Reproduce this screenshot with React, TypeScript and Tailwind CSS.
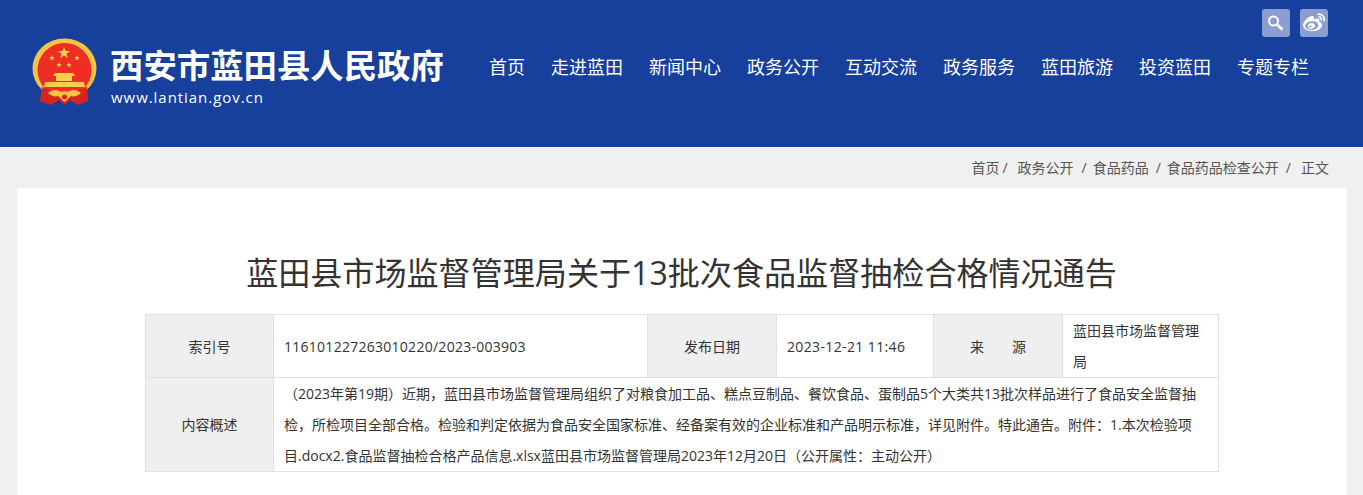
import { FaWeibo } from "react-icons/fa";

const nav = ["首页", "走进蓝田", "新闻中心", "政务公开", "互动交流", "政务服务", "蓝田旅游", "投资蓝田", "专题专栏"];

function Star({ x, y, r, fill = "#f7cf4e" }: { x: number; y: number; r: number; fill?: string }) {
  const pts = Array.from({ length: 10 }, (_, i) => {
    const a = -Math.PI / 2 + (i * Math.PI) / 5;
    const d = i % 2 === 0 ? r : r * 0.4;
    return `${(x + d * Math.cos(a)).toFixed(2)},${(y + d * Math.sin(a)).toFixed(2)}`;
  }).join(" ");
  return <polygon points={pts} fill={fill} />;
}

function Emblem() {
  return (
    <svg width="66" height="70" viewBox="0 0 66 70" className="shrink-0">
      <ellipse cx="32.5" cy="30.5" rx="32" ry="30" fill="#f6c445" />
      <circle cx="32.5" cy="32" r="27" fill="#ee2d24" />
      <Star x={32} y={15} r={6.5} />
      <Star x={20} y={20} r={3} />
      <Star x={45} y={20} r={3} />
      <Star x={27} y={27} r={2.8} />
      <Star x={37} y={27} r={2.8} />
      <path d="M23 35h18l2 3H21z" fill="#f7cf4e" />
      <rect x="24" y="38" width="16" height="5" fill="#f7cf4e" />
      <path d="M13 44h39l1 5H12z" fill="#f7cf4e" />
      <path d="M10 49 L18 52 L26 58 L39 58 L47 52 L55 49 L56 63 L46 67 L38 62 L32.5 67 L27 62 L19 67 L8 63z" fill="#d8241f" />
      <path d="M16 55c4-3 8-4 11-2 2 1 3 1 5.500 0 2.500 1 3.500 1 5.500 0 3-2 7-1 11 2-3 3-7 4-10 3l-6.500 6-6.500-6c-3 1-7 0-10-3z" fill="#f6c445" />
      <circle cx="32.5" cy="59" r="2.500" fill="#d8241f" />
    </svg>
  );
}

const th = "bg-[#efefef] border border-[#e0e0e0] text-center font-normal align-middle";
const td = "border border-[#e0e0e0] align-middle px-[10px] py-0";

export default function App() {
  return (
    <div
      className="h-[495px] overflow-hidden bg-[#f0f0f0] text-[#333]"
      style={{ fontFamily: '"Open Sans", "Noto Sans CJK SC", sans-serif' }}
    >
      <header className="h-[147px] bg-[#16409c] flex text-white">
        <div className="pl-[32px] pt-[38px] flex items-start gap-[12px] w-[489px] shrink-0">
          <Emblem />
          <div className="pt-[5px]">
            <div className="text-[33.4px] font-bold leading-[44px] whitespace-nowrap">西安市蓝田县人民政府</div>
            <div className="text-[15px] leading-[20px] tracking-[0.95px] pl-px whitespace-nowrap font-medium">www.lantian.gov.cn</div>
          </div>
        </div>
        <div className="flex-1">
          <div className="flex justify-end gap-[10px] pt-[9px] pr-[35px]">
            <div className="w-[28px] h-[28px] rounded-[3px] bg-[#8a9fcf] flex items-center justify-center">
              <svg width="28" height="28" viewBox="0 0 28 28" fill="none" stroke="white">
                <circle cx="11.500" cy="12" r="4.500" strokeWidth="2" />
                <path d="M15.500 16l5 4.500" strokeWidth="3" />
              </svg>
            </div>
            <div className="w-[28px] h-[28px] rounded-[3px] bg-[#8a9fcf] flex items-center justify-center">
              <FaWeibo size={22} className="text-white" />
            </div>
          </div>
          <nav className="flex gap-[26px] mt-[16px] text-[18px] leading-[28px] whitespace-nowrap">
            {nav.map((n) => (
              <span key={n}>{n}</span>
            ))}
          </nav>
        </div>
      </header>

      <div className="h-[41px] flex items-center justify-end pr-[34px] text-[14px] text-[#555] whitespace-nowrap">
        <span>首页</span>
        <span className="ml-[3px] mr-[10px]">/</span>
        <span>政务公开</span>
        <span className="ml-[8px] mr-[6px]">/</span>
        <span>食品药品</span>
        <span className="ml-[7px] mr-[6px]">/</span>
        <span>食品药品检查公开</span>
        <span className="ml-[7px] mr-[10px]">/</span>
        <span>正文</span>
      </div>

      <main className="mx-[17px] w-[1330px] h-[400px] bg-white pt-[61px]">
        <h1 className="text-[32.1px] leading-[48px] text-center text-[#333] font-normal pr-[1px]">
          蓝田县市场监督管理局关于13批次食品监督抽检合格情况通告
        </h1>
        <table className="mt-[17px] ml-[128px] w-[1073px] table-fixed border-collapse text-[14px] leading-[31px]">
          <colgroup>
            <col className="w-[128px]" />
            <col className="w-[374px]" />
            <col className="w-[129px]" />
            <col className="w-[157px]" />
            <col className="w-[129px]" />
            <col className="w-[156px]" />
          </colgroup>
          <tbody>
            <tr className="h-[63px]">
              <th className={th}>索引号</th>
              <td className={`${td} tracking-[0.27px]`}>116101227263010220/2023-003903</td>
              <th className={th}>发布日期</th>
              <td className={`${td} tracking-[0.37px]`}>2023-12-21 11:46</td>
              <th className={th}>来{"\u3000\u3000"}源</th>
              <td className={td}>蓝田县市场监督管理局</td>
            </tr>
            <tr className="h-[94px]">
              <th className={th}>内容概述</th>
              <td className={td} colSpan={5}>
                （2023年第19期）近期，蓝田县市场监督管理局组织了对粮食加工品、糕点豆制品、餐饮食品、蛋制品5个大类共13批次样品进行了食品安全监督抽检，所检项目全部合格。检验和判定依据为食品安全国家标准、经备案有效的企业标准和产品明示标准，详见附件。特此通告。附件：1.本次检验项目.docx2.食品监督抽检合格产品信息.xlsx蓝田县市场监督管理局2023年12月20日（公开属性：主动公开）
              </td>
            </tr>
          </tbody>
        </table>
      </main>
    </div>
  );
}
